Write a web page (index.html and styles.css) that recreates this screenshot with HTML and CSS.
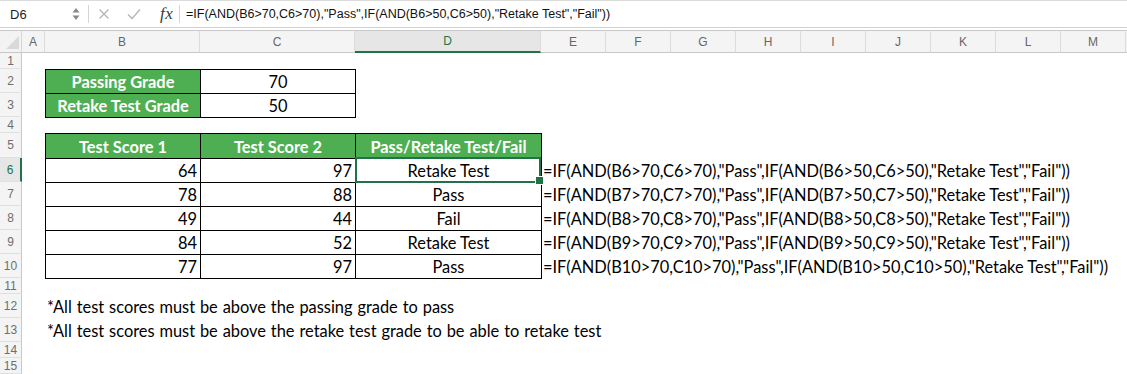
FILE: index.html
```html
<!DOCTYPE html>
<html>
<head>
<meta charset="utf-8">
<title>Excel sheet</title>
<link rel="stylesheet" href="styles.css">
</head>
<body>
<div class="app">
  <div class="fbar">
    <div class="namebox">D6</div>
    <div class="spin">
      <svg width="8" height="16" viewBox="0 0 8 16"><path d="M4 2 L7.5 6.5 L0.5 6.5 Z" fill="#8a8a8a"/><path d="M4 14 L7.5 9.5 L0.5 9.5 Z" fill="#8a8a8a"/></svg>
    </div>
    <div class="vdiv"></div>
    <div class="fbtn">
      <svg width="12" height="12" viewBox="0 0 12 12"><path d="M1.5 1.5 L10.5 10.5 M10.5 1.5 L1.5 10.5" stroke="#b4b4b4" stroke-width="1.3" fill="none"/></svg>
    </div>
    <div class="fbtn">
      <svg width="14" height="12" viewBox="0 0 14 12"><path d="M1 6.5 L5 10.5 L13 1.5" stroke="#b4b4b4" stroke-width="1.3" fill="none"/></svg>
    </div>
    <div class="fx">fx</div>
    <div class="vdiv"></div>
    <div class="ftext">=IF(AND(B6&gt;70,C6&gt;70),"Pass",IF(AND(B6&gt;50,C6&gt;50),"Retake Test","Fail"))</div>
  </div>

  <div class="sheet">
    <div class="corner"><svg width="22" height="22" viewBox="0 0 22 22"><path d="M19 6 L19 19 L6 19 Z" fill="#d9d9d9"/></svg></div>
    <div class="ch">A</div>
    <div class="ch">B</div>
    <div class="ch">C</div>
    <div class="ch sel">D</div>
    <div class="ch">E</div>
    <div class="ch">F</div>
    <div class="ch">G</div>
    <div class="ch">H</div>
    <div class="ch">I</div>
    <div class="ch">J</div>
    <div class="ch">K</div>
    <div class="ch">L</div>
    <div class="ch">M</div>
    <div class="ch last"></div>

    <div class="rh">1</div>
    <div class="rh">2</div>
    <div class="rh">3</div>
    <div class="rh">4</div>
    <div class="rh">5</div>
    <div class="rh sel">6</div>
    <div class="rh">7</div>
    <div class="rh">8</div>
    <div class="rh">9</div>
    <div class="rh">10</div>
    <div class="rh">11</div>
    <div class="rh">12</div>
    <div class="rh">13</div>
    <div class="rh">14</div>
    <div class="rh">15</div>

    <div class="grades">
      <div class="c hd">Passing Grade</div>
      <div class="c ctr">70</div>
      <div class="c hd">Retake Test Grade</div>
      <div class="c ctr">50</div>
    </div>

    <div class="scores">
      <div class="c hd">Test Score 1</div>
      <div class="c hd">Test Score 2</div>
      <div class="c hd">Pass/Retake Test/Fail</div>

      <div class="c num">64</div>
      <div class="c num">97</div>
      <div class="c ctr active">Retake Test</div>

      <div class="c num">78</div>
      <div class="c num">88</div>
      <div class="c ctr">Pass</div>

      <div class="c num">49</div>
      <div class="c num">44</div>
      <div class="c ctr">Fail</div>

      <div class="c num">84</div>
      <div class="c num">52</div>
      <div class="c ctr">Retake Test</div>

      <div class="c num">77</div>
      <div class="c num">97</div>
      <div class="c ctr">Pass</div>
    </div>

    <div class="formulas">
      <div class="line">=IF(AND(B6&gt;70,C6&gt;70),"Pass",IF(AND(B6&gt;50,C6&gt;50),"Retake Test","Fail"))</div>
      <div class="line">=IF(AND(B7&gt;70,C7&gt;70),"Pass",IF(AND(B7&gt;50,C7&gt;50),"Retake Test","Fail"))</div>
      <div class="line">=IF(AND(B8&gt;70,C8&gt;70),"Pass",IF(AND(B8&gt;50,C8&gt;50),"Retake Test","Fail"))</div>
      <div class="line">=IF(AND(B9&gt;70,C9&gt;70),"Pass",IF(AND(B9&gt;50,C9&gt;50),"Retake Test","Fail"))</div>
      <div class="line">=IF(AND(B10&gt;70,C10&gt;70),"Pass",IF(AND(B10&gt;50,C10&gt;50),"Retake Test","Fail"))</div>
    </div>

    <div class="notes">
      <div class="line">*All test scores must be above the passing grade to pass</div>
      <div class="line">*All test scores must be above the retake test grade to be able to retake test</div>
    </div>
  </div>
</div>
</body>
</html>
```

FILE: styles.css
```css
* {
  box-sizing: border-box;
  margin: 0;
  padding: 0;
}

body {
  margin: 0;
  width: 1127px;
  height: 374px;
  overflow: hidden;
  background: #ffffff;
  font-family: "Liberation Sans", Arial, sans-serif;
}

.app {
  width: 1127px;
  height: 374px;
  overflow: hidden;
}

/* ---------- formula bar ---------- */
.fbar {
  height: 28px;
  margin-bottom: 2px;
  display: flex;
  align-items: center;
  border-top: 1px solid #dcdcdc;
  border-bottom: 1px solid #d2d2d2;
  background: #ffffff;
}

.namebox {
  width: 72px;
  padding-left: 10px;
  font-size: 13px;
  color: #1e1e1e;
}

.spin {
  width: 16px;
  display: flex;
  align-items: center;
  justify-content: flex-start;
}

.vdiv {
  width: 1px;
  height: 18px;
  background: #d4d4d4;
}

.fbtn {
  width: 30px;
  display: flex;
  justify-content: center;
  align-items: center;
}

.fx {
  width: 30px;
  padding-left: 11px;
  font-family: "Liberation Serif", "Times New Roman", serif;
  font-style: italic;
  font-size: 17px;
  color: #3a3a3a;
  letter-spacing: 0.5px;
}

.ftext {
  padding-left: 6px;
  font-size: 12.5px;
  color: #111111;
  white-space: nowrap;
}

/* ---------- sheet grid ---------- */
.sheet {
  display: grid;
  grid-template-columns: 22px 23px 155px 155px 186px repeat(9, 65px) 1fr;
  grid-template-rows: 23px 16px 24px 24px 16px 25px repeat(5, 24px) 16px 24px 24px 16px 16px;
}

.corner {
  background: #f3f3f3;
  border-top: 1px solid #c8c8c8;
  border-bottom: 1px solid #c8c8c8;
  border-right: 1px solid #d6d6d6;
  overflow: hidden;
}

.corner svg {
  display: block;
  margin-top: -1px;
}

.ch {
  background: #f4f4f4;
  border-top: 1px solid #c8c8c8;
  border-bottom: 1px solid #c8c8c8;
  border-right: 1px solid #dcdcdc;
  display: flex;
  align-items: center;
  justify-content: center;
  font-size: 12px;
  color: #676767;
}

.ch.sel {
  background: #e6e6e6;
  color: #217346;
  border-bottom: 2px solid #217346;
}

.ch.last {
  border-right: none;
}

.rh {
  grid-column: 1;
  background: #f4f4f4;
  border-right: 1px solid #c8c8c8;
  border-bottom: 1px solid #e0e0e0;
  display: flex;
  align-items: center;
  justify-content: center;
  font-size: 12px;
  color: #6e6e6e;
}

.rh.sel {
  background: #e6e6e6;
  color: #217346;
  border-right: 2px solid #217346;
}

/* ---------- cell tables ---------- */
.grades,
.scores {
  display: grid;
  justify-self: start;
  align-self: start;
  border-top: 1px solid #000;
  border-left: 1px solid #000;
  font-family: Lato, "Liberation Sans", sans-serif;
  font-size: 16.4px;
  color: #000;
}

.grades {
  grid-column: 3 / 5;
  grid-row: 3 / 5;
  grid-template-columns: 155px 155px;
  grid-template-rows: 24px 24px;
}

.scores {
  grid-column: 3 / 6;
  grid-row: 6 / 12;
  grid-template-columns: 155px 155px 186px;
  grid-template-rows: 25px repeat(5, 24px);
}

.c {
  border-right: 1px solid #000;
  border-bottom: 1px solid #000;
  display: flex;
  align-items: flex-end;
  line-height: 19px;
  white-space: nowrap;
  padding: 0 3px 2px;
}

.c.hd {
  background: #4eaf52;
  color: #ffffff;
  font-weight: 700;
  justify-content: center;
}

.c.ctr {
  justify-content: center;
}

.c.num {
  justify-content: flex-end;
}

.c.active {
  position: relative;
}

.c.active::after {
  content: "";
  position: absolute;
  top: -2px;
  left: -1px;
  right: 0;
  bottom: -1px;
  border: 2px solid #217346;
}

.c.active::before {
  content: "";
  position: absolute;
  right: -3px;
  bottom: -3px;
  width: 7px;
  height: 7px;
  background: #217346;
  border: 1px solid #ffffff;
  z-index: 2;
}

/* ---------- overflow text ---------- */
.formulas {
  grid-column: 6 / -1;
  grid-row: 7 / 12;
  display: grid;
  grid-template-rows: repeat(5, 24px);
  font-family: Lato, "Liberation Sans", sans-serif;
  font-size: 16.4px;
  color: #000;
}

.notes {
  grid-column: 3 / -1;
  grid-row: 13 / 15;
  display: grid;
  grid-template-rows: repeat(2, 24px);
  font-family: Lato, "Liberation Sans", sans-serif;
  font-size: 16.4px;
  word-spacing: 0.7px;
  color: #000;
}

.line {
  display: flex;
  align-items: flex-end;
  line-height: 19px;
  padding-left: 2px;
  padding-bottom: 2px;
  white-space: nowrap;
}
```
